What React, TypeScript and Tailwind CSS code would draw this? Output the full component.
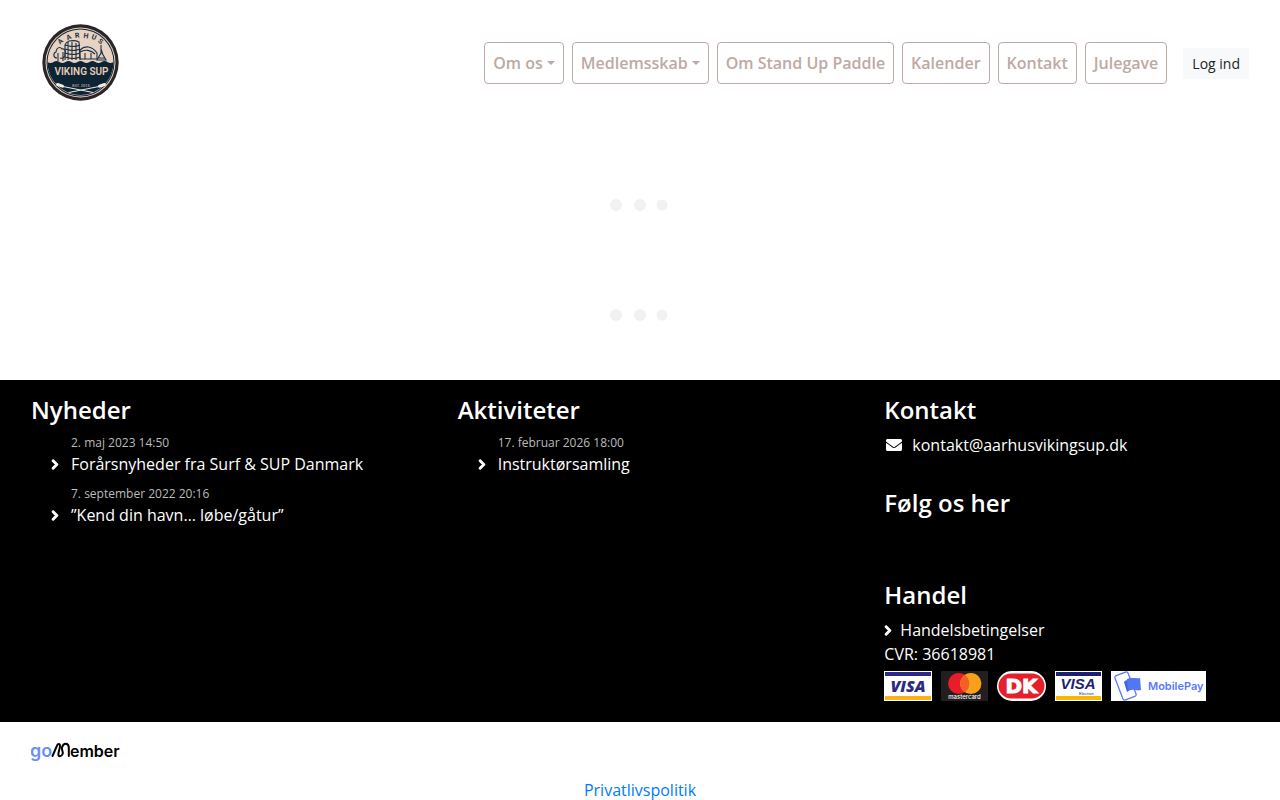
import type { ReactNode } from 'react';
import { FaChevronRight, FaEnvelope } from 'react-icons/fa';

const navItems = [
  { label: 'Om os', dropdown: true },
  { label: 'Medlemsskab', dropdown: true },
  { label: 'Om Stand Up Paddle' },
  { label: 'Kalender' },
  { label: 'Kontakt' },
  { label: 'Julegave' },
];

const news = [
  { date: '2. maj 2023 14:50', title: 'Forårsnyheder fra Surf & SUP Danmark' },
  { date: '7. september 2022 20:16', title: '”Kend din havn… løbe/gåtur”' },
];

const activities = [
  { date: '17. februar 2026 18:00', title: 'Instruktørsamling' },
];

function ClubLogo() {
  return (
    <svg width="100" height="96" viewBox="1 0 100 96" role="img" aria-label="Aarhus Viking SUP">
      <circle cx="50.5" cy="47.5" r="38.2" fill="#2b2625" />
      <circle cx="50.5" cy="47.5" r="35" fill="#e6d3c3" />
      <circle cx="50.5" cy="47.5" r="34" fill="#10273a" />
      <circle cx="50.5" cy="47.5" r="33" fill="#e6d3c3" />
      <path
        d="M17.5 47q3 2 6 0t6 0 6 0 6 0 6 0 6 0 6 0 6 0 6 0 6 0 6 0A33 33 0 0 1 17.500 47Z"
        fill="#0d2435"
      />
      {/* trees, round tower, bridge and sail */}
      <g fill="none" stroke="#1d3040" strokeWidth="1.1">
        <path d="M28 46V38M33 46v-9M27 43c-4 0-4-5-1-6 0-4 4-6 6-3 3-1 4 3 3 5 1 3-3 5-5 4" />
        <path d="M35 45V30q1-3 4-4 6-1 10 1l1 18M35 30q8 3 15 0M35 34q8 3 15 0M35 38q8 3 15 0M35 42q8 3 15 0M38 27v18M42 27v18M46 28v17" />
        <path d="M50 44V35c5-5 12-4 17 3v6M50 37c5-3 11-2 15 2M50 44h17M55 38v6M61 38v6" />
        <path d="M71 30v8l-4 7h9l-4-7M68 43h7M71 34l2 6" />
      </g>
      <text
        x="30 37.4 45.3 53.2 61 67.4"
        y="29.4 25.2 23 22.8 23.6 27"
        rotate="-40 -24 -8 8 22 36"
        fontFamily="Roboto, sans-serif"
        fontWeight="700"
        fontSize="7"
        fill="#1d3040"
      >
        AARHUS
      </text>
      <text
        x="51.5"
        y="60"
        textAnchor="middle"
        fontFamily="Roboto, sans-serif"
        fontWeight="600"
        fontSize="10"
        fill="#e6cdb6"
      >
        VIKING SUP
      </text>
      <text
        x="51"
        y="71.5"
        textAnchor="middle"
        fontFamily="Roboto, sans-serif"
        fontSize="4"
        fill="#e6cdb6"
      >
        EST. 2015
      </text>
      <g stroke="#f3ebe3" strokeLinecap="round">
        <path d="M33 71.5 63 77.5M69 71.5 39 77.5" strokeWidth="1" />
        <path d="M27.5 69.5l5 1.7M74.5 69.5l-5 1.7" strokeWidth="3" />
      </g>
    </svg>
  );
}

function LoadingDots() {
  return (
    <div className="flex h-[110px] items-center justify-center" role="status" aria-label="Indlæser">
      <svg width="100" height="20" viewBox="0 0 100 20" fill="#f1f1f1">
        <circle cx="26" cy="10" r="6" />
        <circle cx="50" cy="10" r="6" />
        <circle cx="72" cy="10" r="5.5" />
      </svg>
    </div>
  );
}

function VisaCard() {
  return (
    <svg width="48" height="30" viewBox="0 0 48 30" role="img" aria-label="Visa">
      <path d="M0 0h48v30H0z" fill="#fff" />
      <path d="M1 1h46v4H1z" fill="#2a2a86" />
      <path d="M1 25h46v4H1z" fill="#fbb018" />
      <text
        x="24"
        y="21"
        textAnchor="middle"
        fontFamily="Open Sans, sans-serif"
        fontStyle="italic"
        fontWeight="800"
        fontSize="16"
        fill="#2a2a86"
      >
        VISA
      </text>
    </svg>
  );
}

function VisaElectronCard() {
  return (
    <svg width="47" height="30" viewBox="0 0 47 30" role="img" aria-label="Visa Electron">
      <path d="M0 0h47v30H0z" fill="#fff" />
      <path d="M1 1h45v4H1z" fill="#1a1f71" />
      <path d="M1 25h45v4H1z" fill="#f7b600" />
      <text
        x="23"
        y="18"
        textAnchor="middle"
        fontFamily="Liberation Sans, sans-serif"
        fontStyle="italic"
        fontWeight="700"
        fontSize="15"
        fill="#1a1f71"
      >
        VISA
      </text>
      <text x="24" y="24" fontFamily="Liberation Sans, sans-serif" fontSize="4" fill="#1a1f71">
        Electron
      </text>
    </svg>
  );
}

function MastercardCard() {
  return (
    <svg width="47" height="30" viewBox="0 0 47 30" role="img" aria-label="Mastercard">
      <path d="M0 0h47v30H0z" fill="#231f20" />
      <circle cx="17.8" cy="12.5" r="10.6" fill="#e81c2b" />
      <circle cx="29.8" cy="12.5" r="10.6" fill="#f9a01b" />
      <path d="M23.8 3.8a10.6 10.6 0 0 1 0 17.4 10.6 10.6 0 0 1 0-17.4Z" fill="#f26122" />
      <text
        x="23.5"
        y="28"
        textAnchor="middle"
        fontFamily="Inter, sans-serif"
        fontWeight="500"
        fontSize="6"
        fill="#fff"
      >
        mastercard
      </text>
    </svg>
  );
}

function DankortCard() {
  return (
    <svg width="49" height="30" viewBox="0 0 49 30" role="img" aria-label="Dankort">
      <rect width="49" height="30" rx="15" fill="#fff" />
      <rect x="1.5" y="2.5" width="46" height="25" rx="12.5" fill="#e4202c" />
      <text
        x="24.5"
        y="22"
        textAnchor="middle"
        fontFamily="DejaVu Sans, sans-serif"
        fontWeight="700"
        fontSize="20"
        fill="#fff"
        stroke="#fff"
        strokeWidth="1"
      >
        DK
      </text>
    </svg>
  );
}

function MobilePayCard() {
  return (
    <svg width="95" height="30" viewBox="0 0 95 30" role="img" aria-label="MobilePay">
      <path d="M0 0h95v30H0z" fill="#fff" />
      <rect
        x="7.5"
        y="2"
        width="14"
        height="26"
        rx="2"
        transform="rotate(-21 14.5 15)"
        fill="#fff"
        stroke="#5a78ff"
        strokeWidth="1.3"
      />
      <path d="M13 11c3-4 8 0 12-4l4 11c-5-2-8 0-13 3Z" fill="#3f66e8" />
      <path d="M16 8c5-2 9 0 13-1l1 12c-4 1-8-1-13 0Z" fill="#5078f5" />
      <text x="37" y="19" fontFamily="Inter, sans-serif" fontWeight="600" fontSize="11" fill="#5a78ff">
        MobilePay
      </text>
    </svg>
  );
}

function GoMemberLogo() {
  return (
    <svg width="92" height="24" viewBox="0 0 92 24" role="img" aria-label="goMember">
      <text x="-1" y="17" fontFamily="Inter, sans-serif" fontWeight="600" fontSize="18" fill="#6b8ff5">
        go
      </text>
      <path
        d="M21.500 16 26 5.600c1-2.400 3.200-2 3 .4-.2 3-1.600 5.600-1.600 8 0 3 3 3 4.200 0 1-2.400-1.400-4.200-.6-6.600 1.200-4.600 6.400-5.200 6.800 0V16"
        fill="none"
        stroke="#000"
        strokeWidth="2"
        strokeLinecap="round"
        strokeLinejoin="round"
      />
      <text x="39" y="17" fontFamily="Inter, sans-serif" fontWeight="600" fontSize="16" fill="#000">
        ember
      </text>
    </svg>
  );
}

function FooterHeading({ children }: { children: ReactNode }) {
  return <h4 className="mb-[9px] text-2xl leading-7 font-semibold">{children}</h4>;
}

function PostList({ items }: { items: { date: string; title: string }[] }) {
  return (
    <ul className="space-y-2 pl-5">
      {items.map((item) => (
        <li key={item.title} className="pl-5">
          <div className="text-xs leading-[19px] text-[#bbb]">{item.date}</div>
          <a href="#" className="-ml-5 flex items-center">
            <FaChevronRight className="mr-3 w-2 stroke-current stroke-[50] text-[11px]" />
            {item.title}
          </a>
        </li>
      ))}
    </ul>
  );
}

export default function App() {
  return (
    <div className="bg-white font-['Open_Sans','Noto_Sans',sans-serif] text-base text-[#212529]">
      <header className="flex items-center justify-between px-[31px] py-[15px]">
        <a href="#">
          <ClubLogo />
        </a>
        <nav className="flex items-center gap-2">
          {navItems.map((item) =>
            item.dropdown ? (
              <button
                key={item.label}
                className="flex items-center rounded border border-[#bcaaa4] px-2 py-2 font-semibold text-[#bcaaa4]"
              >
                {item.label}
                <span className="ml-1 border-x-4 border-t-4 border-x-transparent border-t-[#bcaaa4]" />
              </button>
            ) : (
              <a
                key={item.label}
                href="#"
                className="rounded border border-[#bcaaa4] px-2 py-2 font-semibold text-[#bcaaa4]"
              >
                {item.label}
              </a>
            ),
          )}
          <button className="ml-2 rounded-xs border border-[#f8f9fa] bg-[#f8f9fa] px-2 py-1 text-sm leading-[21px]">
            Log ind
          </button>
        </nav>
      </header>

      <main className="pt-6 pb-[10px]">
        <LoadingDots />
        <LoadingDots />
      </main>

      <footer>
        <div className="grid grid-cols-3 bg-black pt-4 pb-[21px] text-white">
          <section className="pl-[31px]">
            <FooterHeading>Nyheder</FooterHeading>
            <PostList items={news} />
          </section>

          <section className="pl-[31px]">
            <FooterHeading>Aktiviteter</FooterHeading>
            <PostList items={activities} />
          </section>

          <section className="pl-[31px]">
            <FooterHeading>Kontakt</FooterHeading>
            <a href="#" className="flex items-center">
              <FaEnvelope className="mr-2.5 ml-0.5" />
              kontakt@aarhusvikingsup.dk
            </a>

            <div className="mt-8 mb-16">
              <FooterHeading>Følg os her</FooterHeading>
            </div>

            <FooterHeading>Handel</FooterHeading>
            <a href="#" className="flex items-center">
              <FaChevronRight className="mr-2 w-2 stroke-current stroke-[50] text-[11px]" />
              Handelsbetingelser
            </a>
            <p>CVR: 36618981</p>
            <div className="mt-[5px] flex gap-[9px]">
              <VisaCard />
              <MastercardCard />
              <DankortCard />
              <VisaElectronCard />
              <MobilePayCard />
            </div>
          </section>
        </div>

        <div className="px-[31px] pt-[18px]">
          <GoMemberLogo />
        </div>
        <div className="mt-3.5 text-center">
          <a href="#" className="text-[#007bff]">
            Privatlivspolitik
          </a>
        </div>
      </footer>
    </div>
  );
}
